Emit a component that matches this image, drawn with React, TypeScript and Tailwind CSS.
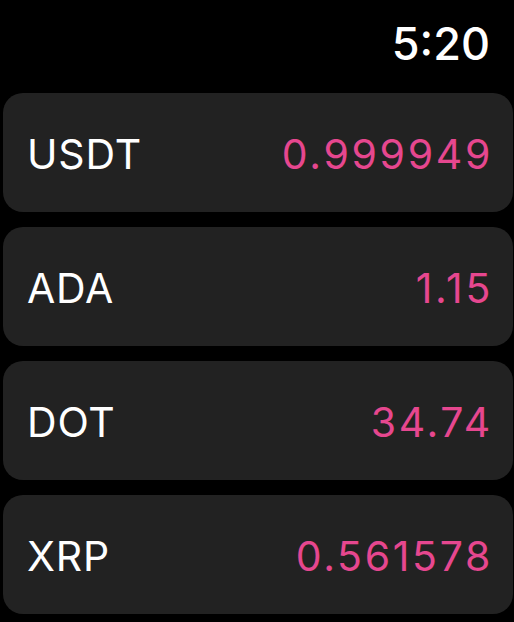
import React from "react";

type Coin = {
  symbol: string;
  price: string;
};

const coins: Coin[] = [
  { symbol: "USDT", price: "0.999949" },
  { symbol: "ADA", price: "1.15" },
  { symbol: "DOT", price: "34.74" },
  { symbol: "XRP", price: "0.561578" },
];

function PriceRow({ coin }: { coin: Coin }) {
  return (
    <div className="h-[119px] rounded-[20px] bg-[#222222] flex items-center justify-between pl-[24px] pr-[20px] pt-[3px]">
      <span className="text-white text-[41px] leading-none tracking-[0.02em]">{coin.symbol}</span>
      <span className="text-[#e6478f] text-[41px] leading-none tracking-[0.065em]">{coin.price}</span>
    </div>
  );
}

export default function App() {
  return (
    <div
      className="w-[514px] h-[622px] bg-black overflow-hidden"
      style={{ fontFamily: "Inter, 'Noto Sans', sans-serif" }}
    >
      <div className="flex justify-end pr-[24px] pt-[21px] h-[93px]">
        <span className="text-white text-[45px] font-medium leading-none">5:20</span>
      </div>
      <div className="flex flex-col gap-[15px] ml-[3px] mr-[1px]">
        {coins.map((coin) => (
          <PriceRow coin={coin} key={coin.symbol} />
        ))}
      </div>
    </div>
  );
}
